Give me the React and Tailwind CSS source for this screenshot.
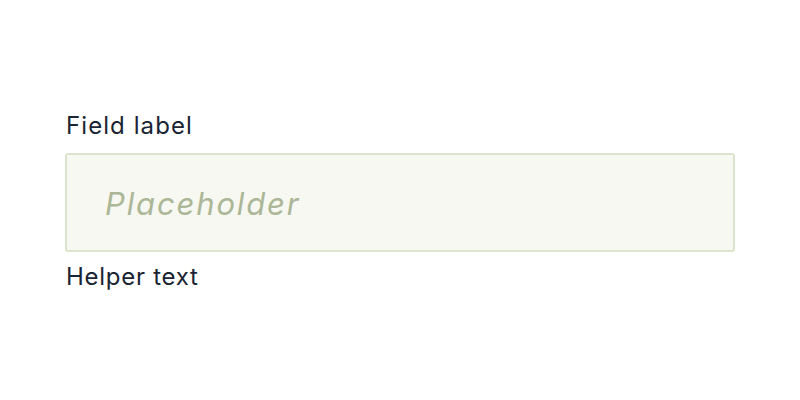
export default function App() {
  return (
    <div className="w-[800px] h-[400px] bg-white pt-[110px] pl-[65px]" style={{ fontFamily: "Inter, 'Liberation Sans', sans-serif" }}>
      <div className="w-[670px] flex flex-col">
        <label htmlFor="field" className="text-[24px] leading-[32px] tracking-[0.045em] text-[#1a2433] pl-px">
          Field label
        </label>
        <input
          id="field"
          type="text"
          placeholder="Placeholder"
          className="mt-[11px] h-[99px] w-full rounded-[3px] border-2 border-[#dde4cd] bg-[#f7f8f1] pl-[38px] pt-[2px] text-[31px] tracking-[0.06em] italic text-[#1a2433] outline-none placeholder:text-[#abb797] placeholder:italic"
          style={{ fontFamily: "Inter, 'Liberation Sans', sans-serif" }}
        />
        <p className="mt-[9px] text-[24px] leading-[32px] tracking-[0.03em] text-[#1a2433] pl-px">Helper text</p>
      </div>
    </div>
  );
}
